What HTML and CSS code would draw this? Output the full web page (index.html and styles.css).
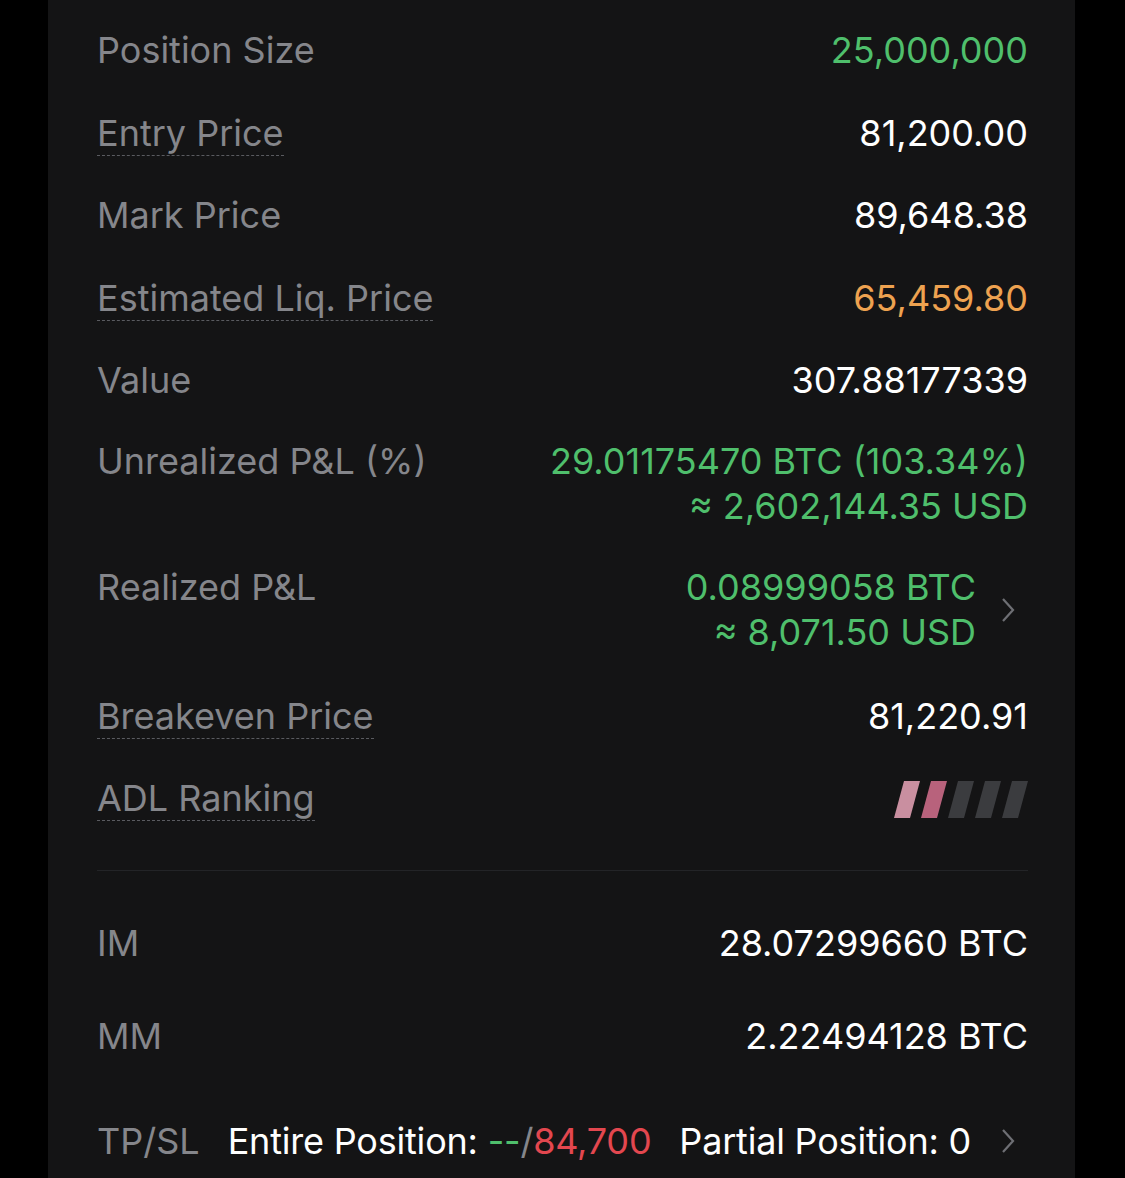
FILE: index.html
```html
<!DOCTYPE html>
<html lang="en">
<head>
    <meta charset="UTF-8">
    <title>Position Details</title>
    <link rel="stylesheet" href="styles.css">
</head>
<body>
    <div class="panel">
        <div class="rows">
            <div class="row">
                <span class="label">Position Size</span>
                <span class="value green">25,000,000</span>
            </div>
            <div class="row">
                <span class="label dotted">Entry Price</span>
                <span class="value">81,200.00</span>
            </div>
            <div class="row">
                <span class="label">Mark Price</span>
                <span class="value">89,648.38</span>
            </div>
            <div class="row">
                <span class="label dotted">Estimated Liq. Price</span>
                <span class="value orange">65,459.80</span>
            </div>
            <div class="row">
                <span class="label">Value</span>
                <span class="value">307.88177339</span>
            </div>
            <div class="row multi">
                <span class="label">Unrealized P&amp;L (%)</span>
                <span class="value green">29.01175470 BTC (103.34%)<br>≈ 2,602,144.35 USD</span>
            </div>
            <div class="row multi">
                <span class="label">Realized P&amp;L</span>
                <span class="value-link">
                    <span class="value green">0.08999058 BTC<br>≈ 8,071.50 USD</span>
                    <svg class="chevron" width="16" height="26" viewBox="0 0 16 26"><path d="M3 2 L13 13 L3 24" fill="none" stroke="#6e6f74" stroke-width="2.2"/></svg>
                </span>
            </div>
            <div class="row">
                <span class="label dotted">Breakeven Price</span>
                <span class="value">81,220.91</span>
            </div>
            <div class="row">
                <span class="label dotted">ADL Ranking</span>
                <svg class="adl" width="134" height="37" viewBox="0 0 134 37">
                    <polygon points="0,37 10,0 26,0 16,37" fill="#c98fa0"/>
                    <polygon points="27,37 37,0 53,0 43,37" fill="#b8627c"/>
                    <polygon points="54,37 64,0 80,0 70,37" fill="#3b3c3f"/>
                    <polygon points="81,37 91,0 107,0 97,37" fill="#3b3c3f"/>
                    <polygon points="108,37 118,0 134,0 124,37" fill="#3b3c3f"/>
                </svg>
            </div>
        </div>

        <div class="divider"></div>

        <div class="rows margin">
            <div class="row">
                <span class="label">IM</span>
                <span class="value">28.07299660 BTC</span>
            </div>
            <div class="row">
                <span class="label">MM</span>
                <span class="value">2.22494128 BTC</span>
            </div>
            <div class="row tpsl">
                <span class="label">TP/SL</span>
                <span class="tpsl-info">
                    <span class="white">Entire Position: </span><span class="green">--</span><span class="label">/</span><span class="red">84,700</span>
                    <span class="white partial">Partial Position: 0</span>
                </span>
                <svg class="chevron" width="16" height="26" viewBox="0 0 16 26"><path d="M3 2 L13 13 L3 24" fill="none" stroke="#6e6f74" stroke-width="2.2"/></svg>
            </div>
        </div>
    </div>
</body>
</html>
```

FILE: styles.css
```css
body {
    margin: 0;
    background-color: #000;
    font-family: "Inter", "Noto Sans", sans-serif;
    font-size: 36px;
}
.panel {
    margin-left: 48px;
    width: 1027px;
    height: 1178px;
    box-sizing: border-box;
    padding: 28px 47px 0 49px;
    background-color: #141415;
}
.rows {
    display: flex;
    flex-direction: column;
    gap: 38.5px;
}
.rows.margin {
    gap: 49px;
}
.row {
    display: flex;
    justify-content: space-between;
    align-items: flex-start;
    line-height: 44px;
}
.row.multi {
    line-height: 45px;
    margin-top: -2px;
}
.label {
    color: #85868b;
}
.dotted {
    border-bottom: 1.5px dashed #5a5b60;
    margin-bottom: -1.5px;
}
.value {
    color: #fff;
    text-align: right;
}
.green {
    color: #4fbf6c;
}
.orange {
    color: #eea250;
}
.red {
    color: #e3474f;
}
.white {
    color: #fff;
}
.value-link {
    display: flex;
    align-items: center;
    gap: 24px;
}
.chevron {
    margin-right: 12px;
}
.adl {
    margin-top: 5px;
}
.divider {
    height: 1px;
    background-color: #232427;
    margin: 50px 0 50px;
}
.tpsl {
    margin-top: 12px;
    align-items: center;
}
.tpsl-info {
    flex: 1;
    margin-left: 28px;
    letter-spacing: -0.2px;
}
.partial {
    margin-left: 18px;
}
```
